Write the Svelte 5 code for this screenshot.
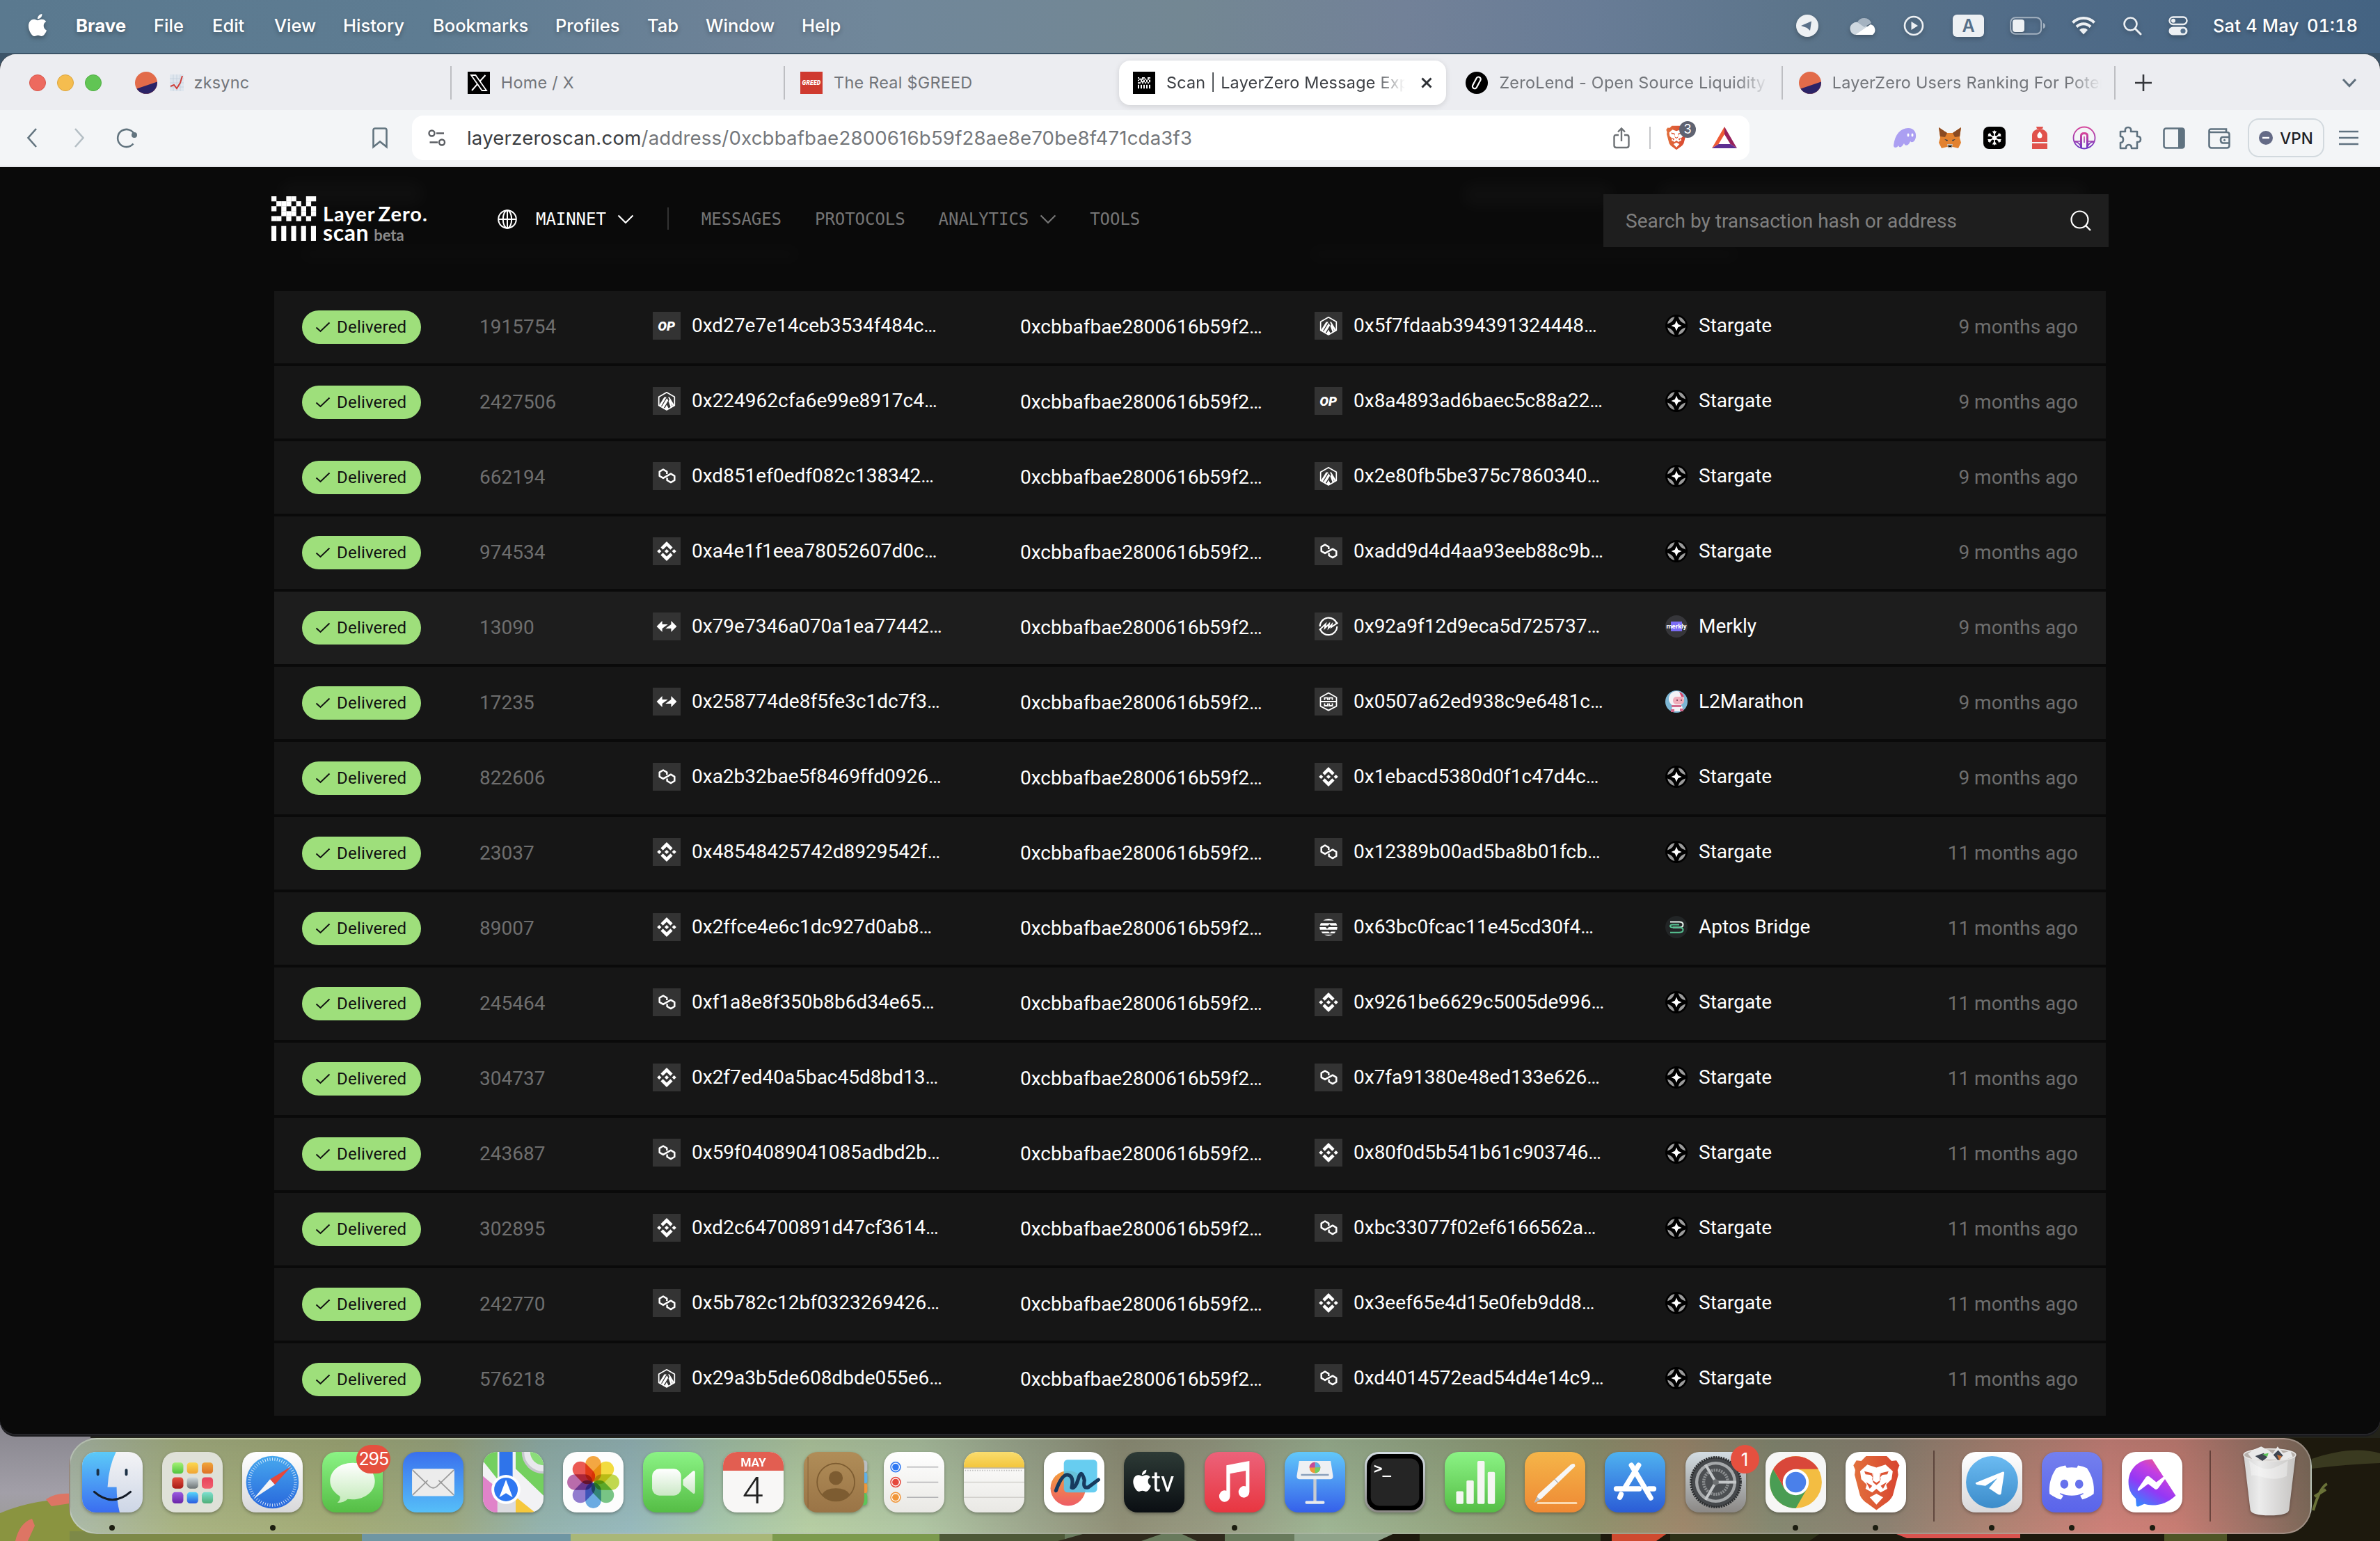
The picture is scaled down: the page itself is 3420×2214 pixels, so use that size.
<script>
  const menus = [
    { label: 'File', w: 84 },
    { label: 'Edit', w: 89 },
    { label: 'View', w: 99 },
    { label: 'History', w: 129 },
    { label: 'Bookmarks', w: 176 },
    { label: 'Profiles', w: 132 },
    { label: 'Tab', w: 84 },
    { label: 'Window', w: 138 },
    { label: 'Help', w: 60 },
  ];

  const tabs = [
    { icon: 'rank', emoji: true, title: 'zksync' },
    { icon: 'x', title: 'Home / X' },
    { icon: 'greed', title: 'The Real $GREED' },
    { icon: 'lz', title: 'Scan | LayerZero Message Explorer', active: true },
    { icon: 'zero', title: 'ZeroLend - Open Source Liquidity' },
    { icon: 'rank', title: 'LayerZero Users Ranking For Potential' },
  ];

  const from = '0xcbbafbae2800616b59f2…';
  const rows = [
    ['1915754', 'op', '0xd27e7e14ceb3534f484c…', 'arb', '0x5f7fdaab394391324448…', 'Stargate', 9],
    ['2427506', 'arb', '0x224962cfa6e99e8917c4…', 'op', '0x8a4893ad6baec5c88a22…', 'Stargate', 9],
    ['662194', 'poly', '0xd851ef0edf082c138342…', 'arb', '0x2e80fb5be375c7860340…', 'Stargate', 9],
    ['974534', 'bnb', '0xa4e1f1eea78052607d0c…', 'poly', '0xadd9d4d4aa93eeb88c9b…', 'Stargate', 9],
    ['13090', 'zk', '0x79e7346a070a1ea77442…', 'core', '0x92a9f12d9eca5d725737…', 'Merkly', 9],
    ['17235', 'zk', '0x258774de8f5fe3c1dc7f3…', 'nova', '0x0507a62ed938c9e6481c…', 'L2Marathon', 9],
    ['822606', 'poly', '0xa2b32bae5f8469ffd0926…', 'bnb', '0x1ebacd5380d0f1c47d4c…', 'Stargate', 9],
    ['23037', 'bnb', '0x48548425742d8929542f…', 'poly', '0x12389b00ad5ba8b01fcb…', 'Stargate', 11],
    ['89007', 'bnb', '0x2ffce4e6c1dc927d0ab8…', 'aptos', '0x63bc0fcac11e45cd30f4…', 'Aptos Bridge', 11],
    ['245464', 'poly', '0xf1a8e8f350b8b6d34e65…', 'bnb', '0x9261be6629c5005de996…', 'Stargate', 11],
    ['304737', 'bnb', '0x2f7ed40a5bac45d8bd13…', 'poly', '0x7fa91380e48ed133e626…', 'Stargate', 11],
    ['243687', 'poly', '0x59f04089041085adbd2b…', 'bnb', '0x80f0d5b541b61c903746…', 'Stargate', 11],
    ['302895', 'bnb', '0xd2c64700891d47cf3614…', 'poly', '0xbc33077f02ef6166562a…', 'Stargate', 11],
    ['242770', 'poly', '0x5b782c12bf0323269426…', 'bnb', '0x3eef65e4d15e0feb9dd8…', 'Stargate', 11],
    ['576218', 'arb', '0x29a3b5de608dbde055e6…', 'poly', '0xd4014572ead54d4e14c9…', 'Stargate', 11],
  ];

  const dock = [
    { name: 'finder', run: true },
    { name: 'launchpad' },
    { name: 'safari', run: true },
    { name: 'messages', badge: '295' },
    { name: 'mail' },
    { name: 'maps' },
    { name: 'photos' },
    { name: 'facetime' },
    { name: 'calendar' },
    { name: 'contacts' },
    { name: 'reminders' },
    { name: 'notes' },
    { name: 'freeform' },
    { name: 'tv' },
    { name: 'music', run: true },
    { name: 'keynote' },
    { name: 'terminal' },
    { name: 'numbers' },
    { name: 'pages' },
    { name: 'appstore' },
    { name: 'settings', badge: '1' },
    { name: 'chrome', run: true },
    { name: 'brave', run: true },
    { name: 'sep' },
    { name: 'telegram', run: true },
    { name: 'discord', run: true },
    { name: 'messenger', run: true },
    { name: 'sep' },
    { name: 'trash' },
  ];

  const padColors = [
    ['#a4f076', '#4fc43c'], ['#fbd850', '#f0a432'], ['#f0a63a', '#dd7026'],
    ['#e5503f', '#a81c16'], ['#cfd9dc', '#6d7475'], ['#e8425c', '#f0606e'],
    ['#9a5be0', '#6a25a8'], ['#55d5fb', '#2a5be0'], ['#7ce0cf', '#4fae78'],
  ];
  const petals = ['#f59a23', '#f2d81f', '#b9d432', '#63bd72', '#549fe0', '#8068c8', '#b0559f', '#ea3e36'];
  const ticks = Array.from({ length: 60 }, (_, i) => i * 6);

  // Rows and columns of the pixel mark in the LayerZero logo
  const pixels = ['1..11..11', '.111.1.1.', '1.1.1.1.1', '..111.1.1', '11.1.1.1.'];
  const cells = pixels.flatMap((r, y) => [...r].map((c, x) => ({ x, y, on: c === '1' }))).filter((c) => c.on);
</script>

{#snippet apple(cls)}
  <svg class={cls} viewBox="0 0 24 24"><path fill="currentColor" d="M12.152 6.896c-.948 0-2.415-1.078-3.96-1.04-2.04.027-3.91 1.183-4.961 3.014-2.117 3.675-.546 9.103 1.519 12.09 1.013 1.454 2.208 3.09 3.792 3.039 1.52-.065 2.09-.987 3.935-.987 1.831 0 2.35.987 3.96.948 1.637-.026 2.676-1.48 3.676-2.948 1.156-1.688 1.636-3.325 1.662-3.415-.039-.013-3.182-1.221-3.22-4.857-.026-3.04 2.48-4.494 2.597-4.559-1.429-2.09-3.623-2.324-4.39-2.376-2-.156-3.675 1.09-4.61 1.09zM15.53 3.83c.843-1.012 1.4-2.427 1.245-3.83-1.207.052-2.662.805-3.532 1.818-.78.896-1.454 2.338-1.273 3.714 1.338.104 2.715-.688 3.559-1.701" /></svg>
{/snippet}

{#snippet mark()}
  {#each cells as c}<rect x={c.x} y={c.y} width="1.03" height="1.03" />{/each}
  {#each [0, 2, 4, 6, 8] as x}<rect {x} y="6" width="1" height="3" />{/each}
{/snippet}

{#snippet favicon(kind)}
  <svg class="fav" viewBox="0 0 32 32">
    {#if kind === 'rank'}
      <circle cx="16" cy="16" r="16" fill="#e26b4a" />
      <path d="M2.5 24.5 L31.9 14.5 A16 16 0 0 1 2.5 24.5Z" fill="#2b2367" />
    {:else if kind === 'x'}
      <rect width="32" height="32" />
      <path d="M5 5h6.4l15.6 22h-6.4z" fill="none" stroke="#fff" stroke-width="1.8" />
      <path d="M25.5 5 17.3 14.2M14 17.8 6 27" stroke="#fff" stroke-width="2" />
    {:else if kind === 'greed'}
      <rect width="32" height="32" fill="#cf3a2f" />
      <text x="16" y="19" text-anchor="middle" class="greed">GREED</text>
    {:else if kind === 'lz'}
      <rect width="32" height="32" />
      <g fill="#fff" transform="translate(7 8) scale(2 1.8)">{@render mark()}</g>
    {:else}
      <circle cx="16" cy="16" r="16" />
      <rect x="12.6" y="7" width="6.4" height="18" rx="3.2" transform="rotate(28 16 16)" fill="none" stroke="#fff" stroke-width="2.2" />
    {/if}
  </svg>
{/snippet}

{#snippet chain(kind)}
  <svg class="chain" viewBox="0 0 40 40">
    <rect width="40" height="40" fill="#333" />
    {#if kind === 'op'}
      <text x="19.6" y="26.8" text-anchor="middle" class="op">OP</text>
    {:else if kind === 'arb'}
      <path d="M20 7.8 31.3 14.2V26.6L20 33 8.7 26.6V14.2Z" fill="none" stroke="#fff" stroke-width="1.7" stroke-linejoin="round" />
      <path d="M9.2 26.2 16.6 14.6h3.2L11.6 28.2ZM12.6 28.8 20.4 16l1.8 3.6-6.6 11ZM22 14.6h2l7 11.6-2.2 1.5ZM22.6 20.4l1.8-3.4 3.8 11.6-2.2 1.4ZM20 25.4l3 5.8-3 1.6-3-1.6Z" fill="#fff" />
    {:else if kind === 'poly'}
      <path d="M20.3 17V13.6L15 10.5 9.7 13.6v6.2L15 22.9l11-6.2 5.3 3.1V26L26 29.1 20.6 26v-3.4" fill="none" stroke="#fff" stroke-width="2.5" stroke-linejoin="round" />
    {:else if kind === 'bnb'}
      <path d="M20 6 28.6 14.6 25.4 17.8 20 12.4 14.6 17.8 11.4 14.6ZM20 34 28.6 25.4 25.4 22.2 20 27.6 14.6 22.2 11.4 25.4ZM20 16.9 23.1 20 20 23.1 16.9 20ZM9.3 16.9 12.4 20 9.3 23.1 6.2 20ZM30.7 16.9 33.8 20 30.7 23.1 27.6 20Z" fill="#fff" />
    {:else if kind === 'zk'}
      <path d="M5.6 20 13.6 12v5h8.2L13.6 23v5ZM34.4 20 26.4 12v5L18.2 23h8.2v5Z" fill="#fff" />
    {:else if kind === 'core'}
      <path d="M7.6 20A12.6 12.6 0 0 1 32.2 16.4M32.4 20A12.6 12.6 0 0 1 8 24" fill="none" stroke="#fff" stroke-width="2.2" />
      <path d="M7 25 16 16.4 14.8 22.4 21 16.4 20 22.4 24.8 17.2 24 21 33.5 14.6" fill="none" stroke="#fff" stroke-width="2" />
    {:else if kind === 'nova'}
      <path d="M20 7.5 31.5 14V26.6L20 32.6 8.5 26.6V14Z" fill="none" stroke="#fff" stroke-width="1.8" stroke-linejoin="round" />
      <path d="M9 20H31M14.4 17.8V14.6H18.8V17.8M21.2 17.8V14.6H25.6V17.8M14.4 22.4V26H18.8V22.4M21.2 22.4V26H25.6V22.4" fill="none" stroke="#fff" stroke-width="1.9" />
    {:else}
      <path d="M12.4 10.6A12.8 12.8 0 0 1 27.6 10.6ZM9 14.2H31L32.4 17.8H23.4L21.4 15.8 19.4 17.8H7.6ZM7.2 20H16L18 22.4 20.4 20H32.8L32.2 23.8H7.8ZM9.6 26.4H20L22 28.4 24 26.4H30.4L28.4 29H11.6ZM14 30.8H26A12 12 0 0 1 14 30.8Z" fill="#fff" />
    {/if}
  </svg>
{/snippet}

{#snippet protocol(name)}
  <svg class="proto" viewBox="0 0 32 32">
    {#if name === 'Stargate'}
      <circle cx="16" cy="16" r="16" fill="#000" />
      <path d="M13.4 3C11 9.5 9.5 11 3 13.4A13.3 13.3 0 0 1 13.4 3ZM18.6 3C21 9.5 22.5 11 29 13.4A13.3 13.3 0 0 0 18.6 3ZM13.4 29C11 22.5 9.5 21 3 18.6A13.3 13.3 0 0 0 13.4 29ZM18.6 29C21 22.5 22.5 21 29 18.6A13.3 13.3 0 0 1 18.6 29Z" fill="#9c9c9c" />
      <path d="M16 8.5 18.2 13.8 23.5 16 18.2 18.2 16 23.5 13.8 18.2 8.5 16 13.8 13.8Z" fill="#fff" />
    {:else if name === 'Merkly'}
      <circle cx="16" cy="16" r="16" fill="#36363a" />
      <rect x="8" y="9" width="16" height="14" fill="#7b6cf6" />
      <text x="16" y="19" text-anchor="middle" class="merkly">merkly</text>
    {:else if name === 'L2Marathon'}
      <circle cx="16" cy="16" r="16" fill="#7cb6d4" />
      <circle cx="16" cy="12" r="11" fill="#f4f2f6" />
      <path d="M20 2a11 11 0 0 1 7 8l-4-1z" fill="#d9486e" />
      <rect x="11" y="9" width="16" height="11" rx="5" fill="#f0aebb" />
      <path d="M10 22h14l2 8H9z" fill="#f4f2f6" />
      <path d="M9 21h14v3H9zM8 27h5v4H8zM21 26h5v4h-5z" fill="#d06a8c" />
      <circle cx="17" cy="14" r="1" fill="#73354b" /><circle cx="23" cy="14" r="1" fill="#73354b" />
    {:else}
      <circle cx="16" cy="16" r="16" fill="#222526" />
      <path d="M7 8.5H20Q25.5 8.5 25.5 12.5T20 16.5H11" fill="none" stroke="#e8f5ee" stroke-width="2" />
      <path d="M20 12.5H11Q7 12.5 7 14.5T11 16.5H20Q25.5 16.5 25.5 20T20 23.8H7" fill="none" stroke="#57c493" stroke-width="2" />
    {/if}
  </svg>
{/snippet}

{#snippet lion()}
  <path d="M34 7H68L76 15 84 14 89 22 86 30 87 38 78 72Q74 80 66 85L51 96 36 85Q28 80 24 72L15 38 16 30 13 22 18 14 26 15Z" fill="url(#gLion)" />
  <path d="M51 26 36 21 24 32 26 45 35 54 33 61 44 67 51 61 58 67 69 61 67 54 76 45 78 32 66 21Z" fill="#fff" />
  <path d="M51 69 62 75 51 87 40 75Z" fill="#fff" />
  <path d="M31 32 44 35 45 42 41 38 33 37ZM71 32 58 35 57 42 61 38 69 37ZM46 34 45 47 51 51 57 47 56 34 58 45 56 51 51 55 46 51 44 45ZM34 50 44 56 40 61ZM68 50 58 56 62 61Z" fill="#dd5535" />
{/snippet}

{#snippet app(name)}
  <svg class="app" viewBox="0 0 100 100">
    {#if name === 'finder'}
      <g clip-path="url(#squircle)">
        <rect width="100" height="100" fill="url(#gFace)" />
        <path d="M0 0H56Q44 24 42 58H57Q57 80 62 100H0Z" fill="url(#gSky)" />
      </g>
      <path d="M26 30V37M73 30V37" stroke="#1b3045" stroke-width="4.5" stroke-linecap="round" />
      <path d="M20 66Q50 92 80 66" fill="none" stroke="#151c28" stroke-width="3.5" stroke-linecap="round" />
    {:else if name === 'launchpad'}
      <rect width="100" height="100" rx="23" fill="#dfe1d8" />
      {#each padColors as c, i}
        <linearGradient id={'pad' + i} x2="0" y2="1"><stop stop-color={c[0]} /><stop offset="1" stop-color={c[1]} /></linearGradient>
        <rect x={16.5 + (i % 3) * 24.5} y={17.5 + Math.floor(i / 3) * 24.5} width="18.5" height="18.5" rx="5" fill={`url(#pad${i})`} />
      {/each}
    {:else if name === 'safari'}
      <rect width="100" height="100" rx="23" fill="url(#gPaper)" />
      <circle cx="50" cy="50" r="43.5" fill="url(#gSafari)" />
      {#each ticks as t}<path d="M50 9.5V14.5" stroke="#fff" stroke-width="1" transform={`rotate(${t} 50 50)`} opacity=".85" />{/each}
      <path d="M81 24 46 45 54 54Z" fill="#e5483c" /><path d="M19 77 46 45 54 54Z" fill="#f3f4f6" />
    {:else if name === 'messages'}
      <rect width="100" height="100" rx="23" fill="url(#gGreen)" />
      <path d="M50 18C29 18 13 31 13 48 13 58 19 67 29 73Q31 79 25 84 36 84 42 78 46 78.5 50 78.5C71 78.5 87 65 87 48S71 18 50 18Z" fill="url(#gBubble)" />
    {:else if name === 'mail'}
      <rect width="100" height="100" rx="23" fill="url(#gMail)" />
      <rect x="15" y="28" width="70" height="45" rx="4" fill="#ececec" />
      <path d="M16 71 41 47M84 71 59 47M16 30 44 57Q50 62 56 57L84 30" fill="none" stroke="#9b9b9b" stroke-width="2" />
    {:else if name === 'maps'}
      <g clip-path="url(#squircle)">
        <rect width="100" height="100" fill="#f2f2f4" />
        <path d="M0 0H24V45L0 15ZM54 0H100V72L54 28Z" fill="#74d05f" />
        <path d="M0 40 24 60V100H0Z" fill="#e083c9" /><path d="M54 74 86 100H54Z" fill="#f6c83c" />
        <circle cx="100" cy="0" r="34" fill="#e8e8ec" stroke="#c6c6cc" stroke-width="4" />
        <circle cx="100" cy="0" r="22" fill="#8bdc7a" />
        <path d="M24 60H54V100H24Z" fill="#dcdce0" />
        <path d="M27 0H49V45H27Z" fill="#2f74ea" />
      </g>
      <circle cx="38" cy="62" r="24" fill="#fff" /><circle cx="38" cy="62" r="19.5" fill="#2f78f2" />
      <path d="M38 46 49 75 38 68 27 75Z" fill="#fff" />
    {:else if name === 'photos'}
      <rect width="100" height="100" rx="23" fill="#fdfdfd" />
      <g class="petals">{#each petals as p, i}<rect x="37" y="7" width="26" height="42" rx="13" fill={p} opacity=".86" transform={`rotate(${i * 45} 50 50)`} />{/each}</g>
    {:else if name === 'facetime'}
      <rect width="100" height="100" rx="23" fill="url(#gGreen)" />
      <rect x="15" y="28" width="48" height="44" rx="12" fill="url(#gBubble2)" />
      <path d="M66 46 82 32Q86 29 86 35V65Q86 71 82 68L66 55Z" fill="url(#gBubble2)" />
    {:else if name === 'calendar'}
      <g clip-path="url(#squircle)"><rect width="100" height="100" fill="#f8f7f6" /><rect width="100" height="31" fill="#e25e51" /></g>
      <text x="50" y="24" text-anchor="middle" class="month">MAY</text>
      <text x="49" y="84.5" text-anchor="middle" class="day">4</text>
    {:else if name === 'contacts'}
      <rect x="80" y="14" width="25" height="20" rx="5" fill="#b9bdc0" /><rect x="80" y="34" width="25" height="18" rx="4" fill="#5fb0e8" />
      <rect x="80" y="52" width="25" height="16" rx="4" fill="#f0963a" /><rect x="80" y="68" width="25" height="20" rx="5" fill="#5cc45a" />
      <rect width="100" height="100" rx="23" fill="url(#gBrown)" />
      <path d="M7 8V92" stroke="#7c5a32" stroke-width="1.5" opacity=".6" />
      <circle cx="53" cy="50" r="31" fill="none" stroke="#7d5c31" stroke-width="2" />
      <circle cx="53" cy="43" r="11.5" fill="#7d5c31" /><path d="M30 70Q36 60 53 60T76 70Q66 81 53 81T30 70Z" fill="#7d5c31" />
    {:else if name === 'reminders'}
      <rect width="100" height="100" rx="23" fill="url(#gWhite)" />
      {#each ['#2f78f2', '#e5483c', '#f0963a'] as c, i}
        <circle cx="19.5" cy={25 + i * 25} r="8" fill="#fff" stroke={c} stroke-width="1.8" /><circle cx="19.5" cy={25 + i * 25} r="5.5" fill={c} />
        <path d={`M38 ${25 + i * 25}H90`} stroke="#b4b4b6" stroke-width="1.8" />
      {/each}
    {:else if name === 'notes'}
      <g clip-path="url(#squircle)"><rect width="100" height="100" fill="url(#gWhite)" /><rect width="100" height="26" fill="url(#gNote)" /></g>
      <path d="M0 26.5H100" stroke="#a79d84" stroke-width="1.5" /><path d="M2 30.5H98" stroke="#bbb" stroke-width="2" stroke-dasharray="1.6 2.4" />
      <path d="M0 50H100M0 75H100" stroke="#d3d1cd" stroke-width="1.8" />
    {:else if name === 'freeform'}
      <rect width="100" height="100" rx="23" fill="#fff" />
      <circle cx="40" cy="60" r="29" fill="url(#gPeach)" />
      <rect x="33" y="13" width="55" height="54" rx="6" fill="#52c6ee" opacity=".88" />
      <path d="M20 64Q30 36 40 38T46 59Q52 61 57 44T67 47Q64 62 74 58L90 46" fill="none" stroke="#173a5e" stroke-width="6" stroke-linecap="round" stroke-linejoin="round" />
    {:else if name === 'tv'}
      <rect width="100" height="100" rx="23" fill="url(#gDark)" />
      <svg x="12" y="29" width="36" height="37" viewBox="0 0 24 24"><path fill="#fff" d="M12.152 6.896c-.948 0-2.415-1.078-3.96-1.04-2.04.027-3.91 1.183-4.961 3.014-2.117 3.675-.546 9.103 1.519 12.09 1.013 1.454 2.208 3.09 3.792 3.039 1.52-.065 2.09-.987 3.935-.987 1.831 0 2.35.987 3.96.948 1.637-.026 2.676-1.48 3.676-2.948 1.156-1.688 1.636-3.325 1.662-3.415-.039-.013-3.182-1.221-3.22-4.857-.026-3.04 2.48-4.494 2.597-4.559-1.429-2.09-3.623-2.324-4.39-2.376-2-.156-3.675 1.09-4.61 1.09zM15.53 3.83c.843-1.012 1.4-2.427 1.245-3.83-1.207.052-2.662.805-3.532 1.818-.78.896-1.454 2.338-1.273 3.714 1.338.104 2.715-.688 3.559-1.701" /></svg>
      <text x="46" y="65" class="tvtext">tv</text>
    {:else if name === 'music'}
      <rect width="100" height="100" rx="23" fill="url(#gMusic)" />
      <path d="M36 22 74 15V66A9 9.5 0 1 1 68 57V31L42 36V73A9 9.5 0 1 1 36 64Z" fill="#fff" />
    {:else if name === 'keynote'}
      <rect width="100" height="100" rx="23" fill="url(#gKey)" />
      <rect x="47.5" y="42" width="5" height="42" fill="#c8ccd2" /><rect x="34" y="81" width="32" height="5" rx="2" fill="#e8eaee" />
      <path d="M24 15H76L80 40Q80 45 76 45H24Q20 45 20 40Z" fill="#eef0f3" /><path d="M27 38H73" stroke="#8ba0bb" stroke-width="3" />
      <circle cx="50" cy="26" r="9" fill="#f0963a" /><path d="M50 26V17A9 9 0 0 1 59 26Z" fill="#5fb0e8" /><path d="M50 26H59A9 9 0 0 1 50 35Z" fill="#74d05f" /><path d="M50 26V17A9 9 0 0 0 41 26Z" fill="#c24a9a" />
    {:else if name === 'terminal'}
      <rect width="100" height="100" rx="23" fill="url(#gSteel)" /><rect x="3.5" y="3.5" width="93" height="93" rx="20" fill="#000" />
      <rect x="10" y="11" width="80" height="78" rx="14" fill="#252525" />
      <text x="15" y="36" class="prompt">&gt;_</text>
    {:else if name === 'numbers'}
      <rect width="100" height="100" rx="23" fill="url(#gGreen)" />
      <rect x="19" y="65" width="12" height="21" rx="2" fill="#f4f6f2" /><rect x="36" y="47" width="12" height="39" rx="2" fill="#f4f6f2" />
      <rect x="54" y="15" width="12" height="71" rx="2" fill="#f4f6f2" /><rect x="71" y="33" width="12" height="53" rx="2" fill="#f4f6f2" />
    {:else if name === 'pages'}
      <rect width="100" height="100" rx="23" fill="url(#gOrange)" />
      <path d="M16 84 22 70 76 21Q84 17 83 24L28 77Z" fill="#f6f6f6" /><path d="M49 45 55 51" stroke="#aaa" stroke-width="1.5" />
      <path d="M16 84 20 74 26 79Z" fill="#b9b9b9" /><path d="M22 84.5H85" stroke="#fbd9b0" stroke-width="3.5" stroke-linecap="round" />
    {:else if name === 'appstore'}
      <rect width="100" height="100" rx="23" fill="url(#gStore)" />
      <path d="M56 22 34 58M27 70 25 75M44 22 76 76M19 61H57M73 61H81" stroke="#fff" stroke-width="8.5" stroke-linecap="round" />
    {:else if name === 'settings'}
      <rect width="100" height="100" rx="23" fill="url(#gSteel)" />
      <circle cx="50" cy="50" r="41" fill="#45484b" stroke="#2c2e30" stroke-width="4" stroke-dasharray="2.6 1.5" />
      <circle cx="50" cy="50" r="34" fill="#a5a8aa" /><circle cx="50" cy="50" r="29" fill="#4c4f52" />
      <circle cx="50" cy="50" r="20" fill="none" stroke="#8b8e90" stroke-width="5" stroke-dasharray="2.6 1.5" />
      <path d="M50 50H84M50 50 33 21M50 50 33 79" stroke="#c3c6c8" stroke-width="4.5" /><circle cx="50" cy="50" r="5" fill="#6d7072" />
    {:else if name === 'chrome'}
      <rect width="100" height="100" rx="23" fill="#f6f6f5" />
      <circle cx="50" cy="50" r="43" fill="#f3bd42" />
      <path d="M31.4 60.7 12.8 28.5A43 43 0 0 0 50 93L68.6 60.7Z" fill="#4a9d54" />
      <path d="M12.8 28.5A43 43 0 0 1 87.2 28.5H50L31.4 60.7Z" fill="#d9473a" />
      <circle cx="50" cy="50" r="21.5" fill="#fff" /><circle cx="50" cy="50" r="17" fill="#4a80ea" />
    {:else if name === 'brave'}
      <rect width="100" height="100" rx="23" fill="#fff" />
      {@render lion()}
    {:else if name === 'telegram'}
      <rect width="100" height="100" rx="23" fill="url(#gPaper)" /><circle cx="50" cy="50" r="43" fill="url(#gTele)" />
      <path d="M23 51 67 33Q71 32 70 36L65 69Q64 72 60 70L45 60 59 43 39 56 25 54Q22 53 23 51Z" fill="#fff" />
    {:else if name === 'discord'}
      <rect width="100" height="100" rx="23" fill="url(#gDisc)" />
      <g transform="translate(12.5 13.5) scale(3.08)"><path fill="#fff" d="M20.317 4.37a19.791 19.791 0 00-4.885-1.515.074.074 0 00-.079.037c-.211.375-.445.865-.608 1.25-1.845-.276-3.68-.276-5.487 0-.164-.393-.406-.874-.618-1.25a.077.077 0 00-.079-.037 19.736 19.736 0 00-4.885 1.515C.533 9.046-.319 13.58.099 18.058c2.084 1.564 4.072 2.479 6.024 3.085.546-.658.957-1.323 1.31-2.022-.694-.353-1.316-.655-1.914-.998l.372-.419c4.005 1.783 8.258 1.783 12.139 0l.373.42c-.598.345-1.219.644-1.873.891.32.805.731 1.47 1.184 2.1 2.045-.578 4.034-1.493 6.087-3.001.5-5.177-.838-9.674-3.549-13.66zM8.02 15.331c-1.183 0-2.157-1.086-2.157-2.419s.956-2.419 2.157-2.419c1.211 0 2.176 1.095 2.157 2.419 0 1.333-.956 2.419-2.157 2.419zm7.975 0c-1.183 0-2.157-1.086-2.157-2.419s.955-2.419 2.157-2.419c1.211 0 2.176 1.095 2.157 2.419 0 1.333-.946 2.419-2.157 2.419z" /></g>
    {:else if name === 'messenger'}
      <rect width="100" height="100" rx="23" fill="#fff" />
      <path d="M50 12C28 12 11 28 11 50 11 61 15 70 23 77L24 89Q25 91 28 90L37 86Q43 88 50 88 72 88 89 72 89 50S72 12 50 12Z" fill="url(#gMess)" />
      <path d="M26.5 61 40 41.500Q43 38.500 46 41L57 50 71 39.500Q75 38 73 42.500L60 60Q57 63.500 54 61L43.500 53 29.500 63.500Q25 65.500 26.500 61Z" fill="#fff" />
    {:else}
      <path d="M7 4 18 96Q20 105 50 105T82 96L93 4Z" fill="url(#gTrash)" />
      <ellipse cx="50" cy="5" rx="43" ry="10" fill="#b7b0ab" stroke="#e6e4e2" stroke-width="2" />
      <path d="M14 3 24-4 36-9 48-3 55 3 63-9 72 2 84-2 88 8 76 13H22Z" fill="#e9e9e9" />
      <path d="M26 7 40 2 46 9 38 15ZM56 5 64-3 72 6 64 14Z" fill="#3f4652" /><path d="M38 4 48 2 46 8Z" fill="#5cc45a" /><path d="M62 5 70 7 66 14Z" fill="#c4713a" />
      <path d="M16 14Q40 34 58 26T80 14L78 40Q60 48 40 42T20 40Z" fill="#fff" opacity=".35" />
    {/if}
  </svg>
{/snippet}

<svg class="defs" width="0" height="0">
  <defs>
    <clipPath id="squircle"><rect width="100" height="100" rx="23" /></clipPath>
    <linearGradient id="gSky" x2="0" y2="1"><stop stop-color="#5ccaf8" /><stop offset="1" stop-color="#3a6df0" /></linearGradient>
    <linearGradient id="gFace" x2="0" y2="1"><stop stop-color="#f4f4f6" /><stop offset="1" stop-color="#cdd6e6" /></linearGradient>
    <linearGradient id="gPaper" x2="0" y2="1"><stop stop-color="#fff" /><stop offset="1" stop-color="#d8d8da" /></linearGradient>
    <linearGradient id="gWhite" x2="0" y2="1"><stop stop-color="#fff" /><stop offset="1" stop-color="#e9e8e4" /></linearGradient>
    <linearGradient id="gSafari" x2="0" y2="1"><stop stop-color="#47a8ee" /><stop offset="1" stop-color="#2867dc" /></linearGradient>
    <linearGradient id="gGreen" x2="0" y2="1"><stop stop-color="#8bf385" /><stop offset="1" stop-color="#55bd45" /></linearGradient>
    <linearGradient id="gBubble" x2="0" y2="1"><stop stop-color="#fff" /><stop offset="1" stop-color="#c3eab9" /></linearGradient>
    <linearGradient id="gBubble2" x2="0" y2="1"><stop stop-color="#fff" /><stop offset="1" stop-color="#cbe8c6" /></linearGradient>
    <linearGradient id="gMail" x2="0" y2="1"><stop stop-color="#3a70ee" /><stop offset="1" stop-color="#56bff8" /></linearGradient>
    <linearGradient id="gBrown" x2="0" y2="1"><stop stop-color="#b08d58" /><stop offset="1" stop-color="#9a7446" /></linearGradient>
    <linearGradient id="gNote" x2="0" y2="1"><stop stop-color="#fadd6e" /><stop offset="1" stop-color="#f3c53c" /></linearGradient>
    <linearGradient id="gPeach" x2="0" y2="1"><stop stop-color="#f3a03c" /><stop offset="1" stop-color="#ee5d66" /></linearGradient>
    <linearGradient id="gDark" x2="0" y2="1"><stop stop-color="#2d3a36" /><stop offset="1" stop-color="#0a0e12" /></linearGradient>
    <linearGradient id="gMusic" x2="0" y2="1"><stop stop-color="#ec627a" /><stop offset="1" stop-color="#e83640" /></linearGradient>
    <linearGradient id="gKey" x2="0" y2="1"><stop stop-color="#62c8fa" /><stop offset="1" stop-color="#3560ea" /></linearGradient>
    <linearGradient id="gSteel" x2="0" y2="1"><stop stop-color="#d3dde3" /><stop offset="1" stop-color="#8b8885" /></linearGradient>
    <linearGradient id="gOrange" x2="0" y2="1"><stop stop-color="#f5b549" /><stop offset="1" stop-color="#ee8934" /></linearGradient>
    <linearGradient id="gStore" x2="0" y2="1"><stop stop-color="#4fb2f0" /><stop offset="1" stop-color="#2b5cd6" /></linearGradient>
    <linearGradient id="gTele" x2="0" y2="1"><stop stop-color="#6bbbf2" /><stop offset="1" stop-color="#3c8cca" /></linearGradient>
    <linearGradient id="gDisc" x2="0" y2="1"><stop stop-color="#7480ee" /><stop offset="1" stop-color="#5a64ea" /></linearGradient>
    <linearGradient id="gLion"><stop stop-color="#e2703c" /><stop offset="1" stop-color="#d8442f" /></linearGradient>
    <linearGradient id="gMess" x1=".2" y1="1" x2=".8" y2="0"><stop stop-color="#2f8cff" /><stop offset=".4" stop-color="#9438f5" /><stop offset=".7" stop-color="#c53fe0" /><stop offset="1" stop-color="#f8606c" /></linearGradient>
    <linearGradient id="gTrash"><stop stop-color="#d3d3d3" /><stop offset=".3" stop-color="#ececec" /><stop offset="1" stop-color="#c6c4c2" /></linearGradient>
    <linearGradient id="gPink" x2="0" y2="1"><stop stop-color="#d6449a" /><stop offset="1" stop-color="#6c36c4" /></linearGradient>
  </defs>
</svg>

<div class="desktop">
  <header class="menubar">
    {@render apple('apple')}
    <b>Brave</b>
    {#each menus as m}<span style:width="{m.w}px">{m.label}</span>{/each}
    <div class="status">
      <svg width="32" height="32" viewBox="0 0 32 32"><circle cx="16" cy="16" r="16" fill="#edf0f3" /><path d="M7 16 22 9.5 20 23 15.5 19Z" fill="#5a7089" /></svg>
      <svg width="42" height="28" viewBox="0 0 42 28" class="cloud"><path d="M9 27A9 9 0 0 1 5 11 9.5 9.5 0 0 1 13 9L30 17Z" fill="#cfd8e0" /><path d="M12 9A11 11 0 0 1 32 10L22 16Z" fill="#a5b3c1" /><path d="M9 27 31 12A8.5 8.5 0 0 1 34 27Z" fill="#fff" /></svg>
      <svg width="30" height="30" viewBox="0 0 30 30" class="play"><circle cx="15" cy="15" r="13" fill="none" stroke="#edf0f3" stroke-width="2.6" /><path d="M11.5 9 21 15 11.5 21Z" fill="#edf0f3" /></svg>
      <div class="inputsrc">A</div>
      <svg width="52" height="26" viewBox="0 0 52 26" class="battery"><rect x="1.2" y="1.2" width="44" height="23.6" rx="7" fill="none" stroke="#a3b1c0" stroke-width="2" /><rect x="4" y="4" width="17" height="18" rx="4" fill="#edf0f3" /><path d="M48 9Q51 10 51 13T48 17Z" fill="#a3b1c0" /></svg>
      <svg width="36" height="28" viewBox="0 0 36 28" class="wifi"><path d="M2.5 9.5A22 22 0 0 1 33.5 9.5M8 15.5A14 14 0 0 1 28 15.5" fill="none" stroke="#edf0f3" stroke-width="4" /><path d="M12 20A8.5 8.5 0 0 1 24 20L18 26.5Z" fill="#edf0f3" /></svg>
      <svg width="28" height="28" viewBox="0 0 28 28" class="find"><circle cx="11.5" cy="11.5" r="9" fill="none" stroke="#edf0f3" stroke-width="2.6" /><path d="M18 18 26 26" stroke="#edf0f3" stroke-width="3" stroke-linecap="round" /></svg>
      <svg width="28" height="28" viewBox="0 0 28 28" class="cc"><rect x="1.5" y="1.5" width="25" height="10.5" rx="5.25" fill="none" stroke="#edf0f3" stroke-width="2.4" /><circle cx="7" cy="6.8" r="3" fill="#edf0f3" /><rect x=".5" y="15.5" width="27" height="12" rx="6" fill="#edf0f3" /><circle cx="21" cy="21.5" r="3.6" fill="#55708c" /></svg>
      <span class="date">Sat 4 May</span><span class="time">01:18</span>
    </div>
  </header>

  <main class="window">
    <div class="tabstrip">
      <div class="lights"><i class="r"></i><i class="y"></i><i class="g"></i></div>
      {#each tabs as t, i}
        <div class="tab" class:active={t.active} class:sep={![2, 3].includes(i)}>
          {@render favicon(t.icon)}
          {#if t.emoji}
            <svg class="chart" viewBox="0 0 20 24"><rect width="20" height="24" fill="#dfe6ee" /><path d="M5 0V24M10 0V24M15 0V24M0 6H20M0 12H20M0 18H20" stroke="#c3cfdb" stroke-width=".8" /><path d="M1 17 6 15 10 20 15 12 18 2" fill="none" stroke="#cf3f3a" stroke-width="2" /></svg>
          {/if}
          <span class="title" class:fade={i > 2}>{t.title}</span>
          {#if t.active}<svg class="close" viewBox="0 0 18 18"><path d="M2.5 2.5 15.5 15.5M15.5 2.5 2.5 15.5" stroke="#2e3136" stroke-width="3" /></svg>{/if}
        </div>
      {/each}
      <svg class="plus" viewBox="0 0 24 24"><path d="M12 0V24M0 12H24" stroke="#34363b" stroke-width="2.6" /></svg>
      <svg class="more" viewBox="0 0 22 14"><path d="M2 2 11 11.5 20 2" fill="none" stroke="#5f6f7c" stroke-width="3" /></svg>
    </div>

    <div class="toolbar">
      <svg class="back" viewBox="0 0 16 30"><path d="M14 2 2.5 15 14 28" fill="none" stroke="#62747f" stroke-width="2.6" /></svg>
      <svg class="fwd" viewBox="0 0 16 30"><path d="M2 2 13.5 15 2 28" fill="none" stroke="#b5bfc5" stroke-width="2.6" /></svg>
      <svg class="reload" viewBox="0 0 30 30"><path d="M26.5 11A12.6 12.6 0 1 0 24.5 23.5" fill="none" stroke="#62747f" stroke-width="2.6" /><circle cx="26" cy="11" r="4" fill="#62747f" /></svg>
      <svg class="bookmark" viewBox="0 0 22 30"><path d="M1.5 4Q1.5 1.5 4 1.5H18Q20.5 1.5 20.5 4V28L11 20.5 1.5 28Z" fill="none" stroke="#62747f" stroke-width="2.6" /></svg>
      <div class="urlbar">
        <svg class="site" viewBox="0 0 26 26"><circle cx="5.5" cy="6.5" r="4" fill="none" stroke="#5b5e63" stroke-width="2.4" /><circle cx="20" cy="19.5" r="4" fill="none" stroke="#5b5e63" stroke-width="2.4" /><path d="M12 6.5H23M2.5 19.5H14" stroke="#5b5e63" stroke-width="2.6" /></svg>
        <span class="url"><em>layerzeroscan.com</em>/address/0xcbbafbae2800616b59f28ae8e70be8f471cda3f3</span>
        <svg class="share" viewBox="0 0 24 32"><path d="M8 12H4.5Q1.5 12 1.5 15V27Q1.5 30 4.5 30H19.5Q22.5 30 22.5 27V15Q22.5 12 19.5 12H16M12 21V2.5M7 7.5 12 2.5 17 7.5" fill="none" stroke="#6d7175" stroke-width="2.4" /></svg>
        <i class="vr"></i>
        <div class="shield"><svg viewBox="10 5 82 93">{@render lion()}</svg><span>3</span></div>
        <svg class="bat" viewBox="0 0 36 32"><path d="M18 0 0 31 9.5 25 18 11Z" fill="#ee5a35" /><path d="M18 0 36 31 26.5 25 18 11Z" fill="#96205c" /><path d="M0 31H36L26.5 25H9.5Z" fill="#5d2f92" /></svg>
      </div>
      <div class="ext">
        <svg viewBox="0 0 36 36"><path d="M2 29C4 13 12 4 23 4 31 4 35 10 34 17 33 23 29 26 26 23 24 29 19 31 17 26 14 32 10 33 9 29 7 33 2 33 2 29Z" fill="#ab9ff2" /><ellipse cx="23" cy="14" rx="1.5" ry="2.6" fill="#fff" /><ellipse cx="29" cy="14" rx="1.5" ry="2.6" fill="#fff" /></svg>
        <svg viewBox="0 0 36 36"><path d="M2 3 14 11H22L34 3 32 18 34 25 30 33 22 31H14L6 33 2 25 4 18Z" fill="#e2812f" /><path d="M2 3 14 11 11 17 4 16ZM34 3 22 11 25 17 32 16Z" fill="#8a4a22" /><path d="M14 27H22L21 33H15Z" fill="#c9bfb6" /><path d="M15 29H21L20 31H16Z" fill="#161616" /><path d="M10 20 15 21 14 23ZM26 20 21 21 22 23Z" fill="#26364a" /></svg>
        <svg viewBox="0 0 36 36"><rect x="2" y="2" width="32" height="32" rx="8" /><path d="M18 7.5V28.5M9 12.8 27 23.2M27 12.8 9 23.2" stroke="#fff" stroke-width="1.6" /><g fill="#fff"><circle cx="18" cy="18" r="3.2" />{#each [0, 60, 120, 180, 240, 300] as a}<path d="M14.8 8.5H21.2L18 13.8Z" transform={`rotate(${a} 18 18)`} />{/each}</g></svg>
        <svg viewBox="0 0 36 36"><path d="M13 2H23L22 5H14Z" fill="#e0524c" /><path d="M7 24V14A11 9 0 0 1 29 14V24Z" fill="#e0524c" /><rect x="7" y="26" width="22" height="8" fill="#e0524c" /><path d="M18 9Q22 13 21.5 15A3.5 3.5 0 0 1 14.5 15Q14 13 18 9Z" fill="#fff" /></svg>
        <svg viewBox="0 0 36 36"><g fill="none" stroke="url(#gPink)"><circle cx="18" cy="18" r="15.5" stroke-width="1.8" /><path d="M13.5 33V15Q13.5 11.5 18 11.5T22.5 15V33" stroke-width="3" /><path d="M3.5 24Q9 23 12.5 29M32.5 24Q27 23 23.5 29M3 23H12M24 23H33M18 16V25" stroke-width="1.6" /></g></svg>
        <svg viewBox="0 0 36 36"><path d="M5 9H12Q11 3 16 3T20 9H29V16Q34 15.5 34 20T29 24V33H21Q21 28 17 28T13 33H5V25Q9 25 9 20.5T5 16Z" fill="none" stroke="#5f7280" stroke-width="2.6" stroke-linejoin="round" /></svg>
        <svg viewBox="0 0 36 36"><rect x="3.5" y="4.5" width="29" height="28" rx="3" fill="none" stroke="#5f7280" stroke-width="2.6" /><path d="M24 4.5H30Q33 4.5 33 7V30Q33 32.5 30 32.5H24Z" fill="#5f7280" /></svg>
        <svg viewBox="0 0 36 36"><path d="M28 10V5.5H6Q3.5 5.5 3.5 8V29Q3.5 32.5 7 32.5H29Q32.5 32.5 32.5 29V13Q32.5 10 29 10H6Q3.5 10 3.5 7.5M32.5 17H23Q20 17 20 21T23 25.5H32.5" fill="none" stroke="#5f7280" stroke-width="2.6" /><circle cx="25.5" cy="21.3" r="1.5" fill="#5f7280" /></svg>
      </div>
      <div class="vpn"><svg viewBox="0 0 20 20"><circle cx="10" cy="10" r="10" fill="#646a86" /><path d="M5 10H15" stroke="#fff" stroke-width="2.6" /></svg>VPN</div>
      <svg class="burger" viewBox="0 0 28 22"><path d="M0 2H28M0 11H28M0 20H28" stroke="#5f7280" stroke-width="2.6" /></svg>
    </div>

    <div class="page">
      <i class="ghost a"></i><i class="ghost b"></i><i class="ghost c"></i><i class="ghost d"></i><i class="ghost e"></i>
      <nav>
        <svg class="mark" viewBox="0 0 9 9" preserveAspectRatio="none">{@render mark()}</svg>
        <div class="brand">
          <strong class="lz">Layer<span>Zero.</span></strong>
          <div class="sub"><strong>scan</strong><small>beta</small></div>
        </div>
        <div class="net">
          <svg class="globe" viewBox="0 0 28 28"><g fill="none" stroke="#fff" stroke-width="2"><circle cx="14" cy="14" r="12.8" /><ellipse cx="14" cy="14" rx="6.2" ry="12.8" /><path d="M14 1V27M1 14H27" /></g></svg>
          MAINNET
          <svg class="chev" viewBox="0 0 24 14"><path d="M1.5 1.5 12 12 22.5 1.5" fill="none" stroke="currentColor" stroke-width="2.2" /></svg>
        </div>
        <i class="bar"></i>
        <div class="links">
          <span>MESSAGES</span><span>PROTOCOLS</span>
          <span class="drop">ANALYTICS<svg class="chev" viewBox="0 0 24 14"><path d="M1.5 1.5 12 12 22.5 1.5" fill="none" stroke="currentColor" stroke-width="2.2" /></svg></span>
          <span>TOOLS</span>
        </div>
        <div class="search">
          <span>Search by transaction hash or address</span>
          <svg viewBox="0 0 32 32"><circle cx="14.5" cy="14.5" r="12" fill="none" stroke="#fff" stroke-width="2.2" /><path d="M23 23 30 30" stroke="#fff" stroke-width="2.4" /></svg>
        </div>
      </nav>

      <div class="table">
        {#each rows as [id, src, hash, dst, hash2, proto, months], i}
          <div class="row" class:hover={i === 4}>
            <div class="badge"><svg viewBox="0 0 22 16"><path d="M1.5 8.5 7.5 14 20.5 1.5" fill="none" stroke="#111" stroke-width="2" /></svg>Delivered</div>
            <span class="dim">{id}</span>
            <div class="cell">{@render chain(src)}<span>{hash}</span></div>
            <span class="from">{from}</span>
            <div class="cell">{@render chain(dst)}<span>{hash2}</span></div>
            <div class="cell">{@render protocol(proto)}<span>{proto}</span></div>
            <span class="dim ago">{months} months ago</span>
          </div>
        {/each}
      </div>
    </div>
  </main>

  <footer>
    <svg class="wall" viewBox="0 0 3420 174" preserveAspectRatio="none">
      <defs>
        <linearGradient id="wLeft" x2="0" y2="1"><stop stop-color="#85838b" /><stop offset=".6" stop-color="#a29fa8" /><stop offset="1" stop-color="#99998f" /></linearGradient>
      </defs>
      <rect width="3420" height="174" fill="#1d190d" />
      <rect width="420" height="174" fill="url(#wLeft)" />
      <path d="M130 0H3420V26H130Z" fill="#23231a" />
      <path d="M0 134Q50 112 130 112V174H0Z" fill="#8a9440" /><path d="M66 114Q80 104 104 106L100 120 74 124ZM22 174Q28 148 46 142L50 152 40 174Z" fill="#dd7564" />
      <path d="M100 160H520V174H100Z" fill="#7d8948" /><path d="M520 160H830V174H520Z" fill="#6f96a3" /><path d="M820 160H1110V174H820Z" fill="#a9b778" />
      <path d="M1110 160H1350V174H1110Z" fill="#7c9a4d" /><path d="M1350 160H1530V174H1350Z" fill="#4d5837" /><path d="M1530 160H1860V174H1530Z" fill="#687a5c" />
      <path d="M1570 160 1520 174H1640L1680 160ZM1690 160 1720 174H1760V160Z" fill="#2f2a1d" />
      <path d="M1860 160H2010L1980 174H1860Z" fill="#8fa38a" /><path d="M2040 160H2300V174H2040Z" fill="#3a4526" /><path d="M2316 160H2400L2380 174H2316Z" fill="#cf4a30" />
      <path d="M2400 160H2620L2600 174H2400Z" fill="#2d3118" /><path d="M2715 160H2903V170H2740Z" fill="#d9534f" /><path d="M3110 160H3200V174H3110Z" fill="#4f5526" />
      <path d="M3322 56Q3380 36 3420 48V62Q3370 64 3322 70Z" fill="#3a3a20" /><path d="M3324 130Q3334 96 3344 92M3326 110 3342 100" fill="none" stroke="#6a7238" stroke-width="4" />
    </svg>
    <div class="dock">
      {#each dock as d}
        {#if d.name === 'sep'}<i class="rule"></i>
        {:else}
          <div class="slot" class:bin={d.name === 'trash'}>
            {@render app(d.name)}
            {#if d.badge}<span class="count" class:wide={d.badge.length > 1}>{d.badge}</span>{/if}
            {#if d.run}<i class="dot"></i>{/if}
          </div>
        {/if}
      {/each}
    </div>
  </footer>
</div>

<style>
  :global(body) { margin: 0; background: #1d190d; }
  .desktop { position: relative; width: 3420px; height: 2214px; overflow: hidden; display: flex; flex-direction: column; font-family: Inter, "Liberation Sans", sans-serif; background: #3c5468; }
  .defs { position: absolute; }
  svg { display: block; flex: none; overflow: visible; }

  .menubar { height: 76px; flex: none; display: flex; align-items: center; box-sizing: border-box; padding: 0 33px 3px 38px; color: #fff; font-size: 25.5px; white-space: nowrap; text-shadow: 0 3px 6px rgba(0, 0, 0, .3);
    background: linear-gradient(90deg, #5a798f 0, #5e7c92 18%, #6d8297 31%, #70879a 37%, #738793 50%, #728198 59%, #687c96 67%, #5b748a 76%, #516c88 85%, #446382 100%); }
  .apple { width: 32px; height: 32px; margin-right: 39px; margin-bottom: 1px; filter: drop-shadow(0 3px 3px rgba(0, 0, 0, .3)); }
  .menubar b { width: 112px; font-weight: 700; font-size: 25.8px; }
  .menubar > span { font-weight: 500; }
  .status { margin-left: auto; display: flex; align-items: center; font-weight: 500; }
  .status svg { filter: drop-shadow(0 3px 3px rgba(0, 0, 0, .25)); }
  .cloud { margin-left: 44px; }
  .play { margin-left: 36px; }
  .inputsrc { margin-left: 41px; width: 45px; height: 32px; border-radius: 6px; background: #edf0f3; color: #566f88; font-weight: 600; font-size: 25px; line-height: 33px; text-align: center; text-shadow: none; box-shadow: 0 3px 6px rgba(0, 0, 0, .2); }
  .battery { margin-left: 37px; }
  .wifi { margin-left: 36px; }
  .find { margin-left: 38px; }
  .cc { margin-left: 38px; }
  .date { margin-left: 36px; width: 135px; letter-spacing: .15px; }
  .time { width: 72px; font-variant-numeric: tabular-nums; }

  .window { position: relative; z-index: 1; flex: none; margin-top: 2px; height: 1982px; border-radius: 22px; overflow: hidden; display: flex; flex-direction: column; background: #0a0a0a; box-shadow: 0 1px 0 1px #26262a, 0 4px 0 #1b1b1e; }
  .tabstrip { height: 80px; flex: none; box-sizing: border-box; border-top: 1px solid #fff; display: flex; align-items: center; background: #ecedf1; }
  .lights { width: 128px; padding-left: 42px; display: flex; gap: 16px; }
  .lights i { width: 24px; height: 24px; border-radius: 50%; box-sizing: border-box; }
  .r { background: #ed6a5f; border: 1px solid #d8574c; }
  .y { background: #f5bd4f; border: 1px solid #dca53c; }
  .g { background: #61c554; border: 1px solid #4fae43; }
  .tab { position: relative; width: 478.3px; height: 64px; box-sizing: border-box; padding: 0 19px 0 23.5px; display: flex; align-items: center; flex: none; font-size: 23.4px; color: #72757a; letter-spacing: .25px; }
  .tab.sep::after { content: ''; position: absolute; right: -1px; top: 8px; width: 2px; height: 48px; background: #bdbec2; }
  .tab.active { width: 470px; margin: 0 5px 0 3px; padding: 0 19px 0 20px; border-radius: 16px; background: #fff; color: #3c3f44; box-shadow: 0 2px 8px rgba(0, 0, 0, .12); }
  .fav { width: 32px; height: 32px; margin-right: 16px; }
  .greed { font: italic 900 8.5px Roboto, sans-serif; fill: #fff; }
  .chart { width: 20px; height: 24px; margin: 0 15px 0 2px; }
  .title { flex: 1; white-space: nowrap; overflow: hidden; line-height: 32px; }
  .title.fade { -webkit-mask-image: linear-gradient(90deg, #000 calc(100% - 46px), transparent); mask-image: linear-gradient(90deg, #000 calc(100% - 46px), transparent); }
  .close { width: 18px; height: 18px; margin-left: 22px; }
  .plus { width: 24px; height: 24px; margin-left: 29px; }
  .more { width: 22px; height: 14px; margin-left: auto; margin-right: 33px; }

  .toolbar { height: 82px; flex: none; box-sizing: border-box; padding: 0 31px 0 38px; border-bottom: 2px solid #e7e8eb; display: flex; align-items: center; background: #f3f5f7; }
  .back { width: 16px; height: 30px; }
  .fwd { width: 16px; height: 30px; margin-left: 52px; }
  .reload { width: 30px; height: 30px; margin-left: 45px; }
  .bookmark { width: 22px; height: 30px; margin-left: 338px; }
  .urlbar { width: 1922px; height: 64px; margin-left: 35px; box-sizing: border-box; padding: 0 18px 0 23px; border-radius: 16px; background: #fff; display: flex; align-items: center; }
  .site { width: 26px; height: 26px; margin-right: 30px; }
  .url { flex: 1; font-size: 27.6px; letter-spacing: .18px; color: #74777b; white-space: nowrap; }
  .url em { font-style: normal; color: #3b3e42; }
  .share { width: 24px; height: 32px; }
  .vr { width: 2px; height: 32px; margin-left: 28px; background: #c5c6c9; }
  .shield { position: relative; width: 32px; margin-left: 21px; }
  .shield svg { width: 32px; height: 36px; }
  .shield span { position: absolute; left: 20px; top: -6px; width: 24px; height: 24px; border-radius: 12px; background: #5f6371; color: #fff; font-size: 18px; line-height: 24px; text-align: center; }
  .bat { width: 36px; height: 32px; margin-left: 35px; }
  .ext { display: flex; gap: 28.5px; margin-left: 205px; }
  .ext svg { width: 36px; height: 36px; }
  .vpn { width: 110px; height: 56px; margin-left: auto; margin-right: 21px; box-sizing: border-box; border: 2px solid #d2d9de; border-radius: 16px; display: flex; align-items: center; justify-content: center; gap: 10px; font-size: 22.5px; font-weight: 500; color: #1c1e26; }
  .vpn svg { width: 20px; height: 20px; }
  .burger { width: 28px; height: 22px; }

  .page { position: relative; flex: 1; background: #0a0a0a; font-family: Roboto, sans-serif; }
  .ghost { position: absolute; border-radius: 30px; background: rgba(255, 255, 255, .022); filter: blur(10px); }
  .a { left: 400px; top: 20px; width: 210px; height: 36px; }
  .b { left: 2100px; top: 22px; width: 220px; height: 36px; }
  .c { left: 430px; top: 112px; width: 720px; height: 26px; opacity: .5; }
  .d { left: 1880px; top: 112px; width: 620px; height: 26px; opacity: .5; }
  .e { left: 2380px; top: 22px; width: 620px; height: 36px; }
  nav { position: relative; height: 178px; box-sizing: border-box; padding: 39px 390px 63px; display: flex; align-items: center; font: 24px "DejaVu Sans Mono", monospace; color: #fff; }
  .mark { width: 64px; height: 64px; fill: #fff; margin-top: -6px; }
  .brand { width: 251px; margin-left: 10px; margin-top: 10px; font-family: Lato, sans-serif; }
  .brand strong { display: block; font-weight: 700; font-size: 29px; line-height: 26px; }
  .brand .lz { margin-bottom: 1px; letter-spacing: 1px; }
  .lz span { margin-left: 4px; }
  .sub { display: flex; align-items: baseline; }
  .brand .sub strong { font-size: 32px; letter-spacing: .6px; }
  .brand small { margin-left: 7px; font-size: 22px; line-height: 26px; font-weight: 700; color: #8a8a8a; }
  .net { display: flex; align-items: center; margin-top: -4px; letter-spacing: -.05px; }
  .globe { width: 28px; height: 28px; margin-right: 27px; }
  .chev { width: 24px; height: 14px; margin-left: 16px; }
  .bar { width: 2px; height: 32px; margin: -6px 47px 0 48px; background: #333; }
  .links { display: flex; gap: 48px; margin-top: -4px; color: #757575; letter-spacing: -.05px; }
  .drop { display: flex; align-items: center; }
  .search { width: 726px; height: 76px; margin-left: auto; box-sizing: border-box; padding: 0 24px 0 32px; display: flex; align-items: center; justify-content: space-between; background: #1e1e1e; color: #808080; font: 28px Roboto, sans-serif; }
  .search svg { width: 32px; height: 32px; }

  .table { padding: 0 394px; display: flex; flex-direction: column; gap: 4px; }
  .row { height: 104px; box-sizing: border-box; padding: 0 40px; display: grid; grid-template-columns: 255px 249px 528px 423px 504px auto 1fr; align-items: center; background: #161616; color: #fff; font-size: 28px; white-space: nowrap; }
  .row.hover { background: #1d1d1d; }
  .badge { width: 171px; height: 48px; box-sizing: border-box; border-radius: 24px; padding-left: 19px; display: flex; align-items: center; gap: 9px; background: #9edf7b; color: #111; font-size: 24px; letter-spacing: .2px; }
  .badge svg { width: 22px; height: 16px; }
  .dim { color: #6e6e6e; }
  .dim, .from, .cell span { padding-bottom: 1px; }
  .cell { display: flex; align-items: center; gap: 16px; padding-bottom: 4px; }
  .ago { text-align: right; }
  .chain { width: 40px; height: 40px; }
  .proto { width: 32px; height: 32px; }
  .op { font: italic 900 19px Roboto, sans-serif; fill: #fff; }
  .merkly { font: 700 9.5px Roboto, sans-serif; fill: #fff; }

  footer { position: absolute; left: 0; bottom: 0; width: 100%; height: 174px; }
  .wall { position: absolute; inset: 0; width: 100%; height: 100%; }
  .dock { position: relative; z-index: 2; height: 138px; width: 3223px; margin: 26px 0 0 99px; box-sizing: border-box; padding-left: 2.8px; border: 2px solid rgba(255, 255, 255, .25); border-radius: 40px; display: flex;
    background:
      linear-gradient(180deg, rgba(90, 95, 90, .22), rgba(255, 255, 255, .05)),
      linear-gradient(90deg, #a9b8a6 0, #a5b07c 5%, #9fa870 12%, #99a67c 17%, #8fb0aa 21%, #92b6ba 25%, #a2c4a8 29%, #b3cc9f 33%, #adc4a0 38%, #98a287 43%, #8b8a70 47%, #93967c 51%, #9ab28f 56%, #90a17a 62%, #8b8d66 68%, #9a8264 72%, #80836a 76%, #877b6a 81%, #ac7d6c 86%, #cc7a72 91%, #c6766c 94%, #91695c 98%, #75604f 100%); }
  .slot { position: relative; width: 115.2px; flex: none; display: flex; justify-content: center; box-sizing: border-box; padding-top: 18px; }
  .slot.bin { padding-left: 4px; }
  .app { width: 87px; height: 87px; filter: drop-shadow(0 2px 2px rgba(0, 0, 0, .3)); }
  .petals rect { mix-blend-mode: multiply; }
  .dot { position: absolute; bottom: 3px; left: 53.5px; width: 8px; height: 8px; border-radius: 50%; background: #1c1d10; }
  .rule { width: 2px; height: 102px; margin: 16px 24.8px 0; flex: none; background: rgba(60, 35, 30, .6); }
  .count { position: absolute; left: 79px; top: 8px; width: 41px; height: 41px; border-radius: 21px; background: #e5503f; color: #fff; font-size: 26px; line-height: 41px; text-align: center; }
  .count.wide { left: 63px; width: 49px; font-size: 25px; letter-spacing: -1px; }
  .month { font: 700 20px Roboto, sans-serif; fill: #fff; }
  .day { font: 300 62px Roboto, sans-serif; fill: #222; }
  .tvtext { font: 400 46px Roboto, sans-serif; fill: #fff; }
  .prompt { font: 700 24px "DejaVu Sans Mono", monospace; fill: #fff; }
</style>
